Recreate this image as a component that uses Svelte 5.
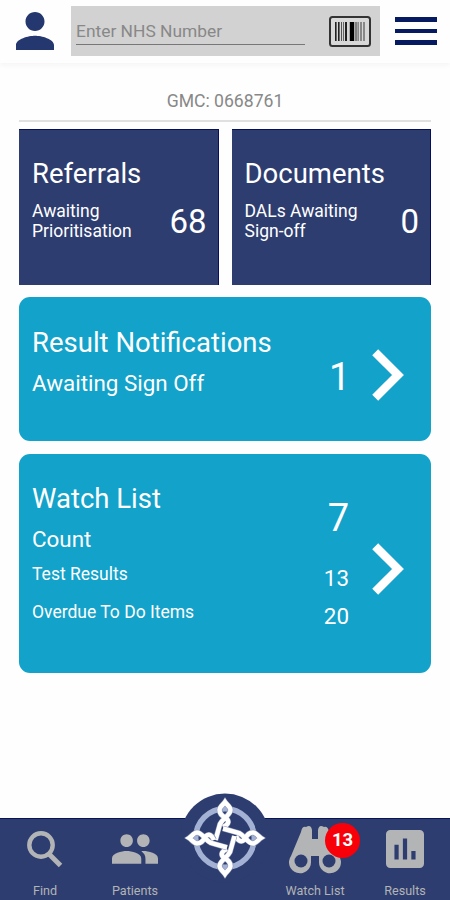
<script lang="ts">
    interface Tile {
        title: string;
        lines: string[];
        count: number;
    }

    const tiles: Tile[] = [
        { title: "Referrals", lines: ["Awaiting", "Prioritisation"], count: 68 },
        { title: "Documents", lines: ["DALs Awaiting", "Sign-off"], count: 0 },
    ];

    const watchItems = [
        { label: "Test Results", count: 13 },
        { label: "Overdue To Do Items", count: 20 },
    ];

    // x, width, shade of each bar in the scanner button
    const bars = [
        [6, 1.6, "#222"],
        [9, 1.6, "#222"],
        [12, 1, "#555"],
        [14, 1, "#666"],
        [16, 2, "#222"],
        [20.8, 4.4, "#000"],
        [26.4, 1.2, "#444"],
        [28.6, 1, "#555"],
        [31, 2, "#888"],
        [34, 2, "#888"],
    ] as const;

    // one arm of the knot, the others are rotations of it
    const arm =
        "M-2 -11C3 -13 4.5 -16 2 -19C-2 -22-5.5 -23-5.5 -28C-5.5 -31-2 -33 0 -36C2 -33 5.5 -31 5.5 -28C5.5 -23-2 -20-5 -14L-9.5 2";
</script>

{#snippet chevron()}
    <svg class="chevron" viewBox="0 0 32 52">
        <path d="M3.2 3.2 26 26 3.2 48.8" />
    </svg>
{/snippet}

<div class="app">
    <header>
        <svg class="person" viewBox="4 4 16 16">
            <path d="M12 12c2.21 0 4-1.79 4-4s-1.79-4-4-4-4 1.79-4 4 1.79 4 4 4zm0 2c-2.67 0-8 1.34-8 4v2h16v-2c0-2.66-5.33-4-8-4z" />
        </svg>
        <div class="search">
            <div class="field">Enter NHS Number</div>
            <svg class="barcode" viewBox="0 0 42 31">
                <rect class="frame" x="1" y="1" width="40" height="29" rx="2.5" />
                {#each bars as [x, width, fill]}
                    <rect {x} y="6" {width} height="19" {fill} />
                {/each}
            </svg>
        </div>
        <div class="menu"><i></i><i></i><i></i></div>
    </header>

    <main>
        <div class="gmc"><span>GMC: 0668761</span></div>

        <div class="tiles">
            {#each tiles as tile}
                <section class="tile">
                    <h2>{tile.title}</h2>
                    <div class="row">
                        <p>{tile.lines[0]}<br />{tile.lines[1]}</p>
                        <span class="count">{tile.count}</span>
                    </div>
                </section>
            {/each}
        </div>

        <section class="panel results">
            <div class="info">
                <h2>Result Notifications</h2>
                <p class="sub">Awaiting Sign Off</p>
            </div>
            <span class="big">1</span>
            {@render chevron()}
        </section>

        <section class="panel watch">
            <div class="info">
                <div class="head">
                    <div>
                        <h2>Watch List</h2>
                        <p class="sub">Count</p>
                    </div>
                    <span class="big">7</span>
                </div>
                {#each watchItems as item}
                    <div class="item">
                        <span>{item.label}</span>
                        <span class="num">{item.count}</span>
                    </div>
                {/each}
            </div>
            {@render chevron()}
        </section>
    </main>

    <nav>
        <div class="tab">
            <svg viewBox="0 0 38 38">
                <circle cx="15" cy="15" r="11.7" fill="none" stroke="currentColor" stroke-width="4.4" />
                <path d="M23 24 34.5 35.5" stroke="currentColor" stroke-width="5" />
            </svg>
            <span>Find</span>
        </div>
        <div class="tab">
            <svg class="people" viewBox="1 5 22 14">
                <path d="M16 11c1.66 0 2.99-1.34 2.99-3S17.66 5 16 5s-3 1.34-3 3 1.34 3 3 3zm-8 0c1.66 0 2.99-1.34 2.99-3S9.66 5 8 5 5 6.34 5 8s1.34 3 3 3zm0 2c-2.33 0-7 1.17-7 3.5V19h14v-2.5c0-2.33-4.67-3.5-7-3.5zm8 0c-.29 0-.62.02-.97.05 1.16.84 1.97 1.97 1.97 3.45V19h6v-2.5c0-2.33-4.67-3.5-7-3.5z" />
            </svg>
            <span>Patients</span>
        </div>
        <div class="tab home">
            <svg class="knot" viewBox="-45 -45 90 90">
                <circle class="bump" r="44.5" />
                <circle class="ring" r="29.3" />
                {#each [0, 90, 180, 270] as angle}
                    <g transform="rotate({angle})">
                        <path class="edge" d={arm} />
                        <path class="cord" d={arm} />
                    </g>
                {/each}
            </svg>
        </div>
        <div class="tab">
            <svg class="binoculars" viewBox="0 0 52 50">
                <path d="M12 8Q13 2 17 3Q22 0 23 6V15H29V6Q30 0 35 3Q39 2 40 8L50 32A11 11 0 1 1 30 38V32H22V38A11 11 0 1 1 2 32Z" />
                <circle cx="12" cy="37" r="6.5" fill="#2e3d70" />
                <circle cx="40" cy="37" r="6.5" fill="#2e3d70" />
            </svg>
            <b class="badge">13</b>
            <span>Watch List</span>
        </div>
        <div class="tab">
            <svg viewBox="3 3 18 18">
                <path d="M19 3H5c-1.1 0-2 .9-2 2v14c0 1.1.9 2 2 2h14c1.1 0 2-.9 2-2V5c0-1.1-.9-2-2-2zM9 17H7v-7h2v7zm4 0h-2V7h2v10zm4 0h-2v-4h2v4z" />
            </svg>
            <span>Results</span>
        </div>
    </nav>
</div>

<style>
    :global(body) {
        margin: 0;
        background: #fefefe;
    }

    .app {
        --navy: #2e3d70;
        --teal: #12a2ca;
        display: flex;
        flex-direction: column;
        height: 900px;
        width: 450px;
        overflow: hidden;
        font-family: Roboto, sans-serif;
        color: #fff;
    }

    svg {
        display: block;
        flex: none;
    }

    h2,
    p {
        margin: 0;
        font-weight: 400;
    }

    header {
        display: flex;
        box-sizing: border-box;
        height: 63px;
        padding: 6px 13px 0 16px;
        box-shadow: 0 2px 5px #f4f4f4;
    }

    .person {
        width: 38px;
        height: 38px;
        margin: 6px 17px 0 0;
        fill: #24386f;
    }

    .search {
        display: flex;
        box-sizing: border-box;
        width: 309px;
        height: 50px;
        padding: 10px 9px 0 5px;
        justify-content: space-between;
        background: #d2d2d2;
    }

    .field {
        width: 229px;
        height: 28px;
        border-bottom: 1px solid #777;
        font-size: 17.4px;
        line-height: 31px;
        color: #888;
    }

    .barcode {
        width: 42px;
        height: 31px;
    }
    .frame {
        fill: #d8d8d8;
        stroke: #333;
        stroke-width: 2;
    }

    .menu {
        display: flex;
        flex-direction: column;
        gap: 7px;
        width: 42px;
        margin: 11px 0 0 15px;
    }
    .menu i {
        height: 4.7px;
        background: #061a62;
    }

    main {
        display: flex;
        flex-direction: column;
        flex: 1;
        padding: 0 19px;
    }

    .gmc {
        box-sizing: border-box;
        height: 59px;
        padding-top: 27px;
        border-bottom: 2px solid #e0e0e0;
        text-align: center;
        font-size: 17.6px;
        line-height: 22px;
        color: #888;
    }

    .tiles {
        display: flex;
        gap: 13px;
        margin-top: 7px;
    }

    .tile {
        box-sizing: border-box;
        flex: 1;
        height: 156px;
        padding: 27px 12px 0 13px;
        border: solid #06105a;
        border-width: 1px 1px 0 0;
        background: var(--navy);
    }

    h2 {
        font-size: 27.5px;
        line-height: 34px;
    }

    .row {
        display: flex;
        justify-content: space-between;
        margin-top: 10px;
        font-size: 17.5px;
        line-height: 20px;
    }

    .count {
        margin-right: -1px;
        font-size: 33px;
        line-height: 41px;
    }

    .panel {
        display: flex;
        box-sizing: border-box;
        padding-left: 13px;
        border-radius: 11px;
        background: var(--teal);
    }
    .results {
        height: 144px;
        margin-top: 12px;
        padding-top: 29px;
    }
    .watch {
        height: 219px;
        margin-top: 13px;
        padding-top: 28px;
    }

    .info {
        width: 317px;
    }
    .results .info {
        width: 297px;
    }

    .sub {
        margin-top: 9px;
        font-size: 22.4px;
        line-height: 28px;
    }

    .big {
        font-size: 38px;
        line-height: 44px;
    }
    .results .big {
        width: 20px;
        margin-top: 29px;
    }

    .head {
        display: flex;
        justify-content: space-between;
        margin-bottom: 7px;
    }
    .head .big {
        margin-top: 14px;
    }

    .item {
        display: flex;
        justify-content: space-between;
        height: 38px;
        font-size: 17.5px;
        line-height: 29px;
    }
    .num {
        font-size: 22.4px;
        line-height: 36px;
    }

    .chevron {
        width: 32px;
        height: 52px;
        margin: 23px 0 0 23px;
        fill: none;
        stroke: #fff;
        stroke-width: 8.4;
    }
    .watch .chevron {
        margin-top: 61px;
    }

    nav {
        display: flex;
        box-sizing: border-box;
        height: 82px;
        border-top: 1px solid #0a1458;
        background: var(--navy);
        color: #b2b4b5;
    }

    .tab {
        position: relative;
        display: flex;
        flex: 1;
        flex-direction: column;
        align-items: center;
        justify-content: space-between;
        padding: 11px 0 1px;
        font-size: 12.6px;
        line-height: 17px;
    }
    .tab svg {
        width: 38px;
        height: 38px;
        fill: currentColor;
    }
    .tab .people {
        width: 46px;
        height: 30px;
        margin-top: 4px;
    }
    .tab .binoculars {
        width: 52px;
        height: 50px;
        margin-top: -6px;
    }

    .tab .knot {
        position: absolute;
        top: -26px;
        width: 90px;
        height: 90px;
    }
    .bump {
        fill: var(--navy);
    }
    .ring {
        fill: none;
        stroke: #a3b1d4;
        stroke-width: 5.5;
    }
    .edge,
    .cord {
        fill: none;
        stroke: #fff;
        stroke-width: 4.5;
    }
    .edge {
        stroke: #8590b0;
        stroke-width: 5.5;
    }

    .badge {
        position: absolute;
        top: 4px;
        left: 55px;
        width: 35px;
        height: 35px;
        border-radius: 50%;
        background: #f70009;
        color: #fff;
        font-size: 18.5px;
        line-height: 35px;
        text-align: center;
    }
</style>
